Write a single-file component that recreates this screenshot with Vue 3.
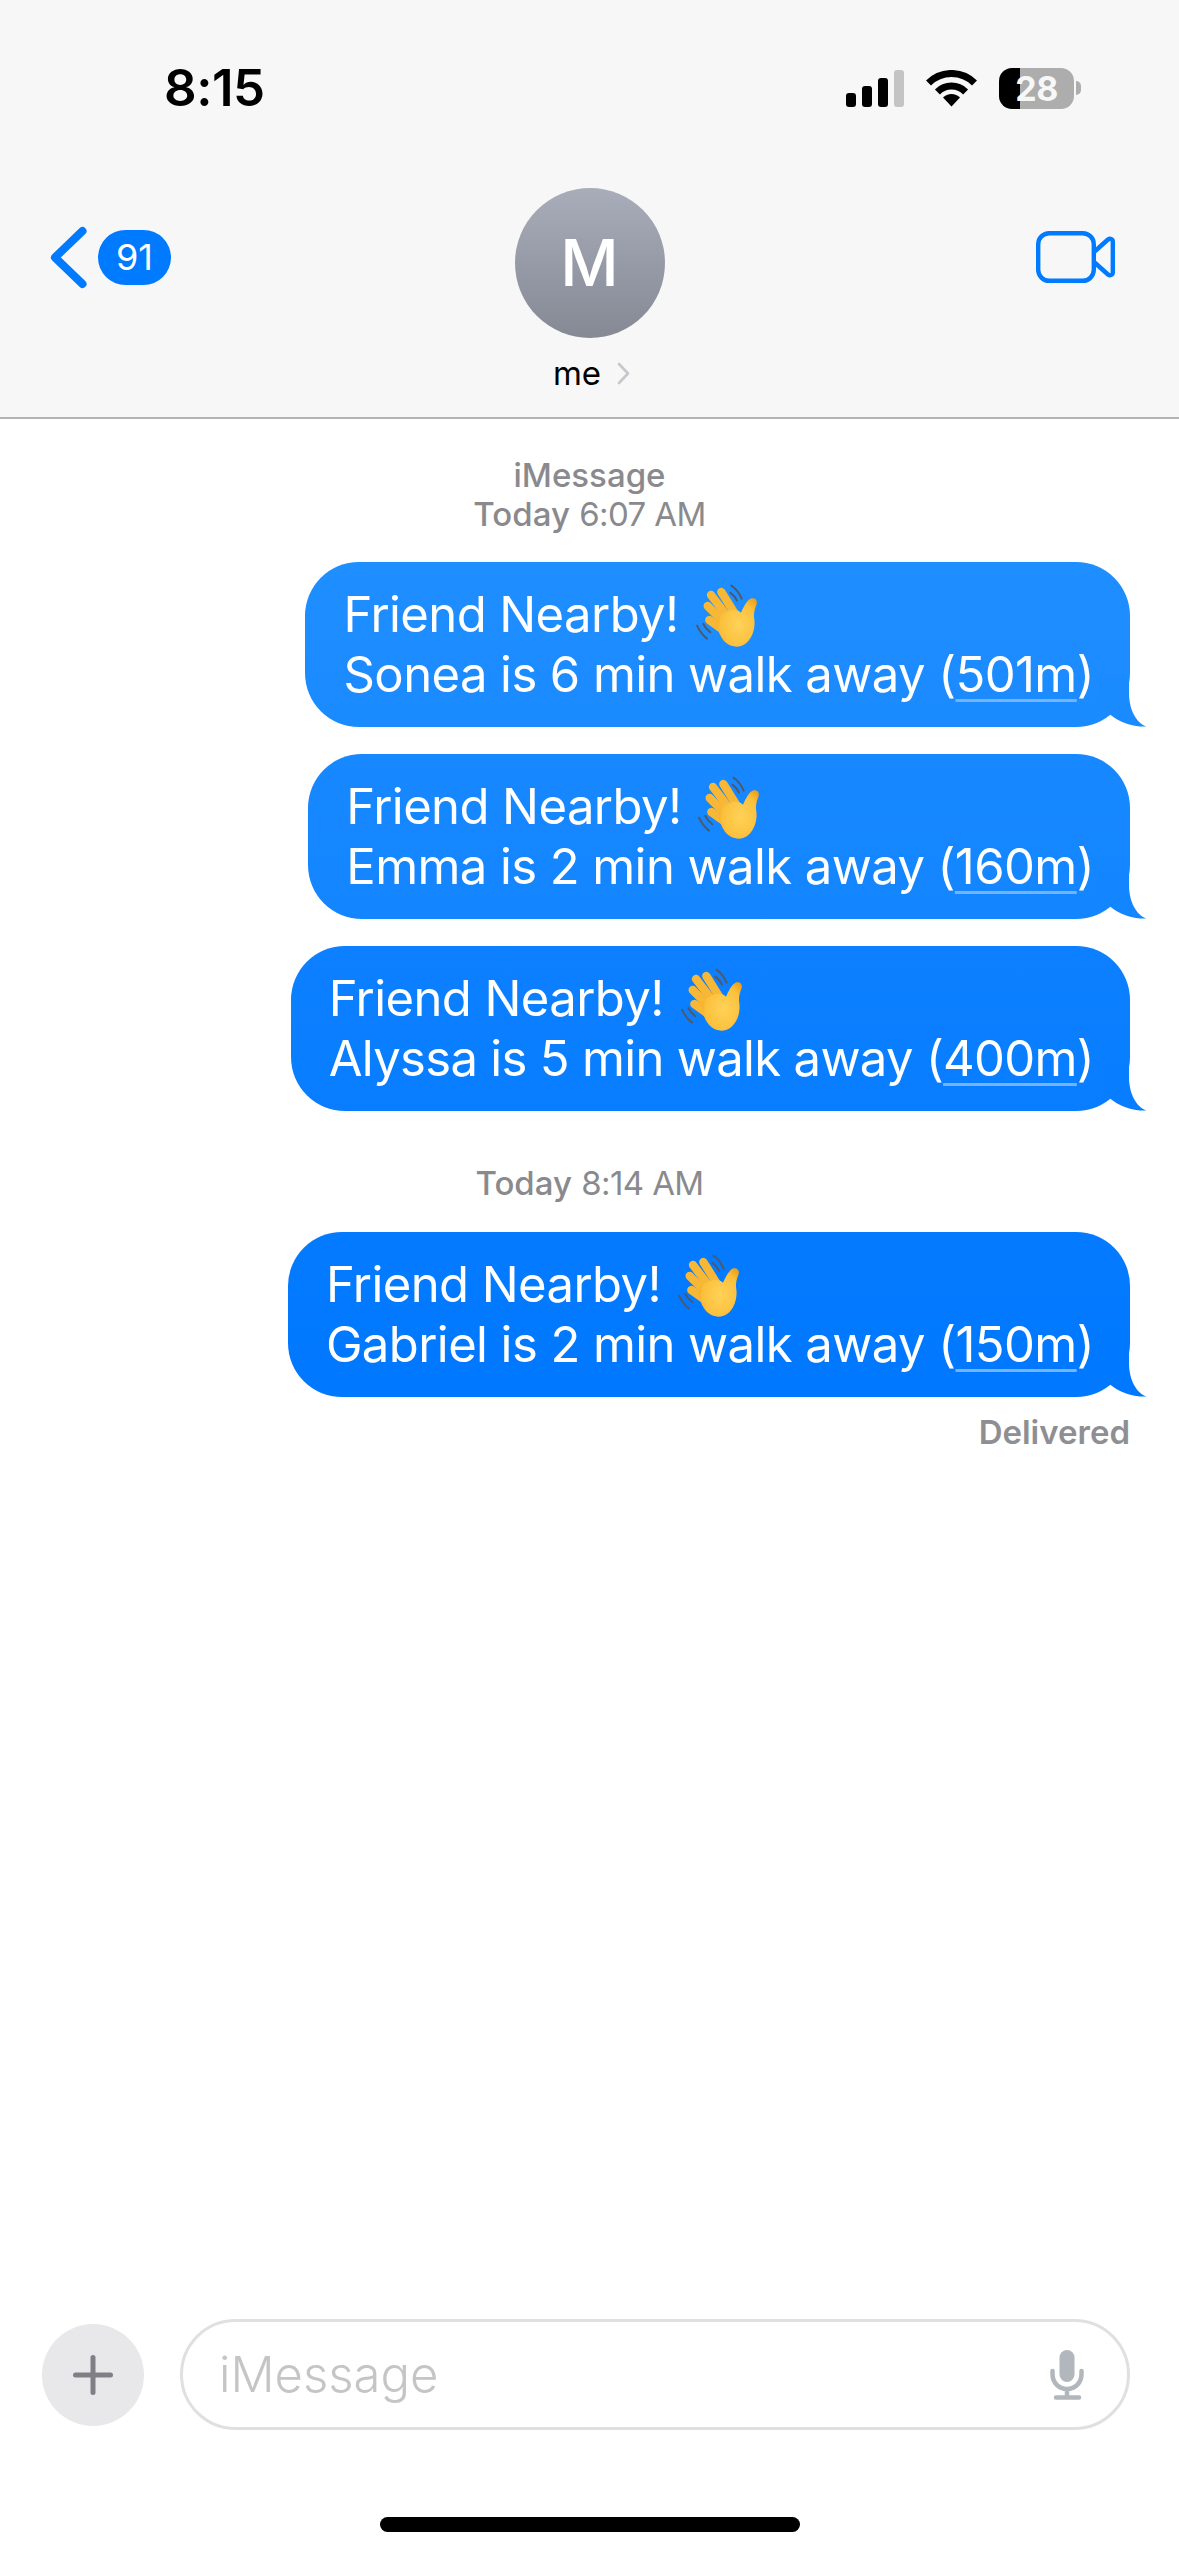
<script setup>
const groups = [
  { id: 'g1', stamp: null, messages: [
    { id: 1, name: 'Sonea', mins: 6, dist: '501m', tone: 't1' },
    { id: 2, name: 'Emma', mins: 2, dist: '160m', tone: 't2' },
    { id: 3, name: 'Alyssa', mins: 5, dist: '400m', tone: 't3' }
  ] },
  { id: 'g2', stamp: '8:14 AM', messages: [
    { id: 4, name: 'Gabriel', mins: 2, dist: '150m', tone: 't4' }
  ] }
]
</script>

<template>
  <div class="phone">
    <header class="header">
      <div class="status">
        <span class="time">8:15</span>
        <div class="status-icons">
          <div class="signal">
            <i class="bar b1"></i><i class="bar b2"></i><i class="bar b3"></i><i class="bar b4"></i>
          </div>
          <svg class="wifi" width="51" height="37" viewBox="0 0 51 37">
            <path d="M2.5 13A32.5 32.5 0 0 1 48.5 13" fill="none" stroke="#000" stroke-width="7"/>
            <path d="M11.4 21.9A20 20 0 0 1 39.6 21.9" fill="none" stroke="#000" stroke-width="7"/>
            <path d="M25.5 36.5L17 27.5A12 12 0 0 1 34 27.5Z" fill="#000"/>
          </svg>
          <div class="battery-wrap">
            <div class="battery">28</div>
            <i class="nub"></i>
          </div>
        </div>
      </div>
      <div class="nav">
        <div class="nav-left">
          <svg width="37" height="63" viewBox="0 0 37 63">
            <path d="M32.5 5L5 31.5L32.5 58" fill="none" stroke="#007aff" stroke-width="8" stroke-linecap="round" stroke-linejoin="round"/>
          </svg>
          <span class="badge">91</span>
        </div>
        <div class="nav-center">
          <div class="avatar">M</div>
          <div class="contact">
            <span>me</span>
            <svg width="13" height="23" viewBox="0 0 13 23">
              <path d="M2 2L11 11.5L2 21" fill="none" stroke="#c7c7cc" stroke-width="2.6" stroke-linecap="round" stroke-linejoin="round"/>
            </svg>
          </div>
        </div>
        <div class="nav-right">
          <svg width="79" height="52" viewBox="0 0 79 52">
            <rect x="2.2" y="2.2" width="55.6" height="47.6" rx="11" fill="none" stroke="#007aff" stroke-width="4.4"/>
            <path d="M58 21L72 8.5C74 7 76.8 8 76.8 10.5V41.5C76.8 44 74 45 72 43.5L58 31" fill="none" stroke="#007aff" stroke-width="4.4" stroke-linejoin="round"/>
          </svg>
        </div>
      </div>
    </header>

    <main class="thread">
      <div class="stamp first-stamp">
        <div class="service">iMessage</div>
        <div><span class="day">Today</span> <span class="clock">6:07 AM</span></div>
      </div>
      <template v-for="group in groups" :key="group.id">
        <div v-if="group.stamp" class="stamp later-stamp">
          <span class="day">Today</span> <span class="clock">{{ group.stamp }}</span>
        </div>
        <div v-for="msg in group.messages" :key="msg.id" class="bubble" :class="msg.tone">
          <div class="line-one">
            <span>Friend Nearby!</span>
            <svg class="wave" width="80" height="70" viewBox="0 0 240 210">
              <defs>
                <radialGradient :id="'hand' + msg.id" cx="0.55" cy="0.55" r="0.65">
                  <stop offset="0" stop-color="#ffd258"/>
                  <stop offset="0.7" stop-color="#fbc03c"/>
                  <stop offset="1" stop-color="#ee9f16"/>
                </radialGradient>
              </defs>
              <g fill="none" stroke="#4f5968" stroke-width="6" stroke-linecap="round">
                <path d="M136 17C150 26 160 40 167 56"/>
                <path d="M133 38C141 44 148 52 153 62"/>
                <path d="M33 137C40 152 50 166 63 176"/>
                <path d="M52 132C57 142 64 150 73 157"/>
              </g>
              <g fill="none" stroke="#f8b836" stroke-width="25" stroke-linecap="round">
                <path d="M106 36L146 100"/>
                <path d="M75 45L125 110"/>
                <path d="M65 78L115 128"/>
                <path d="M70 120L112 150"/>
              </g>
              <path :fill="'url(#hand' + msg.id + ')'" d="M112 100C130 88 150 84 165 98C172 84 182 60 196 55C208 52 215 62 212 72C206 88 202 100 205 118C208 140 202 170 182 188C165 203 140 204 122 190C104 176 95 150 92 132C90 116 98 108 112 100Z"/>
            </svg>
          </div>
          <div class="line-two">{{ msg.name }} is {{ msg.mins }} min walk away (<span class="link">{{ msg.dist }}</span>)</div>
          <svg class="tail" width="50" height="48" viewBox="0 0 50 48">
            <path class="tail-fill" d="M31 0L31 14C31 30 38 44 48.5 47.6C34 48 21 43 12 35.5L0 22L0 0Z"/>
          </svg>
        </div>
      </template>
      <div class="delivered">Delivered</div>
    </main>

    <section class="composer">
      <div class="plus">
        <svg width="40" height="40" viewBox="0 0 40 40">
          <rect x="0" y="17.5" width="40" height="5" rx="2.5" fill="#7f7f85"/>
          <rect x="17.5" y="0" width="5" height="40" rx="2.5" fill="#7f7f85"/>
        </svg>
      </div>
      <div class="input">
        <span class="placeholder">iMessage</span>
        <svg width="34" height="50" viewBox="0 0 34 50">
          <rect x="9.5" y="0" width="15" height="32" rx="7.5" fill="#b2b6bd"/>
          <path d="M2.5 21V24C2.5 33 9 39 17 39C25 39 31.5 33 31.5 24V21M17 39V47M6 47.5H29" fill="none" stroke="#b2b6bd" stroke-width="4.5" stroke-linecap="round"/>
        </svg>
      </div>
    </section>
    <div class="home-bar"></div>
  </div>
</template>

<style scoped>
.phone {
  width: 1179px;
  height: 2556px;
  background: #fff;
  display: flex;
  flex-direction: column;
  overflow: hidden;
  font-family: Inter, "Noto Sans", "Liberation Sans", sans-serif;
  color: #000;
}
.header {
  height: 419px;
  box-sizing: border-box;
  background: #f7f7f7;
  border-bottom: 2px solid #b4b4b6;
  flex-shrink: 0;
}
.status {
  height: 176px;
  display: flex;
  align-items: center;
  justify-content: space-between;
  padding: 0 98px 0 164px;
}
.time {
  font-size: 51px;
  font-weight: 600;
  letter-spacing: -0.5px;
  line-height: 60px;
}
.status-icons {
  display: flex;
  align-items: center;
  gap: 22px;
}
.signal {
  display: flex;
  align-items: flex-end;
  gap: 6px;
  height: 37px;
}
.bar {
  display: block;
  width: 10px;
  background: #000;
  border-radius: 3px;
}
.b1 { height: 14px; }
.b2 { height: 21px; }
.b3 { height: 29px; }
.b4 { height: 37px; background: #c4c4c4; }
.battery-wrap {
  display: flex;
  align-items: center;
  gap: 2px;
}
.battery {
  width: 75px;
  height: 41px;
  border-radius: 13px;
  background: linear-gradient(90deg, #000 28%, #adadad 28%);
  color: #f7f7f7;
  font-size: 34px;
  font-weight: 700;
  line-height: 41px;
  text-align: center;
  letter-spacing: -0.5px;
}
.nub {
  display: block;
  width: 5px;
  height: 14px;
  background: #adadad;
  border-radius: 0 5px 5px 0;
}
.nav {
  display: grid;
  grid-template-columns: 1fr auto 1fr;
  margin-top: 12px;
}
.nav-left {
  display: flex;
  align-items: center;
  align-self: start;
  gap: 11px;
  margin-top: 38px;
  padding-left: 50px;
}
.badge {
  width: 73px;
  height: 55px;
  border-radius: 28px;
  background: #007aff;
  color: #fff;
  font-size: 36px;
  line-height: 55px;
  text-align: center;
}
.nav-center {
  display: flex;
  flex-direction: column;
  align-items: center;
}
.avatar {
  width: 150px;
  height: 150px;
  border-radius: 50%;
  background: linear-gradient(180deg, #a9adba, #858994);
  color: #fff;
  font-size: 64px;
  font-weight: 500;
  line-height: 150px;
  text-align: center;
}
.contact {
  display: flex;
  align-items: center;
  gap: 16px;
  margin-top: 15px;
  font-size: 33px;
  line-height: 40px;
  padding-left: 4px;
}
.nav-right {
  justify-self: end;
  margin-top: 43px;
  padding-right: 64px;
}
.nav-right svg, .nav-left svg { display: block; }
.thread {
  display: flex;
  flex-direction: column;
  align-items: flex-end;
  padding: 37px 49px 0 0;
}
.stamp {
  align-self: stretch;
  padding-left: 49px;
  text-align: center;
  color: #8a8a8e;
  font-size: 33px;
  line-height: 39px;
}
.first-stamp { margin-bottom: 28px; }
.later-stamp { margin: 26px 0 29px; }
.service, .day { font-weight: 500; }
.clock { letter-spacing: -0.6px; }
.bubble {
  position: relative;
  box-sizing: border-box;
  height: 165px;
  padding: 23px 36px 22px 38px;
  border-radius: 54px;
  color: #fff;
  font-size: 49px;
  letter-spacing: -0.58px;
  line-height: 60px;
  white-space: nowrap;
  margin-bottom: 27px;
}
.t1 { background: linear-gradient(180deg, #1f8eff, #1a8aff); }
.t2 { background: linear-gradient(180deg, #1788ff, #1385ff); }
.t3 { background: linear-gradient(180deg, #0c80ff, #087dff); }
.t4 { background: linear-gradient(180deg, #047bff, #0078ff); }
.t1 .tail-fill { fill: #1a8aff; }
.t2 .tail-fill { fill: #1385ff; }
.t3 .tail-fill { fill: #087dff; }
.t4 .tail-fill { fill: #0078ff; }
.t3 .line-two { letter-spacing: -0.68px; }
.line-one {
  display: flex;
  align-items: center;
  height: 60px;
}
.wave {
  margin-left: 7px;
  flex-shrink: 0;
}
.link {
  text-decoration: underline;
  text-decoration-color: #74b4ff;
  text-decoration-thickness: 3px;
  text-underline-offset: 7px;
}
.tail {
  position: absolute;
  right: -18px;
  bottom: 0;
  display: block;
}
.delivered {
  margin-top: -12px;
  color: #8e8e93;
  font-size: 33px;
  font-weight: 600;
  line-height: 40px;
}
.composer {
  margin-top: auto;
  display: flex;
  align-items: center;
  gap: 36px;
  padding: 0 49px 0 42px;
}
.plus {
  width: 102px;
  height: 102px;
  border-radius: 50%;
  background: #e8e8ea;
  display: flex;
  align-items: center;
  justify-content: center;
  flex-shrink: 0;
}
.input {
  flex: 1;
  height: 111px;
  box-sizing: border-box;
  border: 3px solid #e0e0e2;
  border-radius: 56px;
  display: flex;
  align-items: center;
  justify-content: space-between;
  padding: 0 43px 0 36px;
}
.placeholder {
  color: #c5c5c7;
  font-size: 49px;
  font-weight: 300;
}
.home-bar {
  width: 420px;
  height: 15px;
  border-radius: 8px;
  background: #000;
  margin: 87px auto 24px;
}
</style>
